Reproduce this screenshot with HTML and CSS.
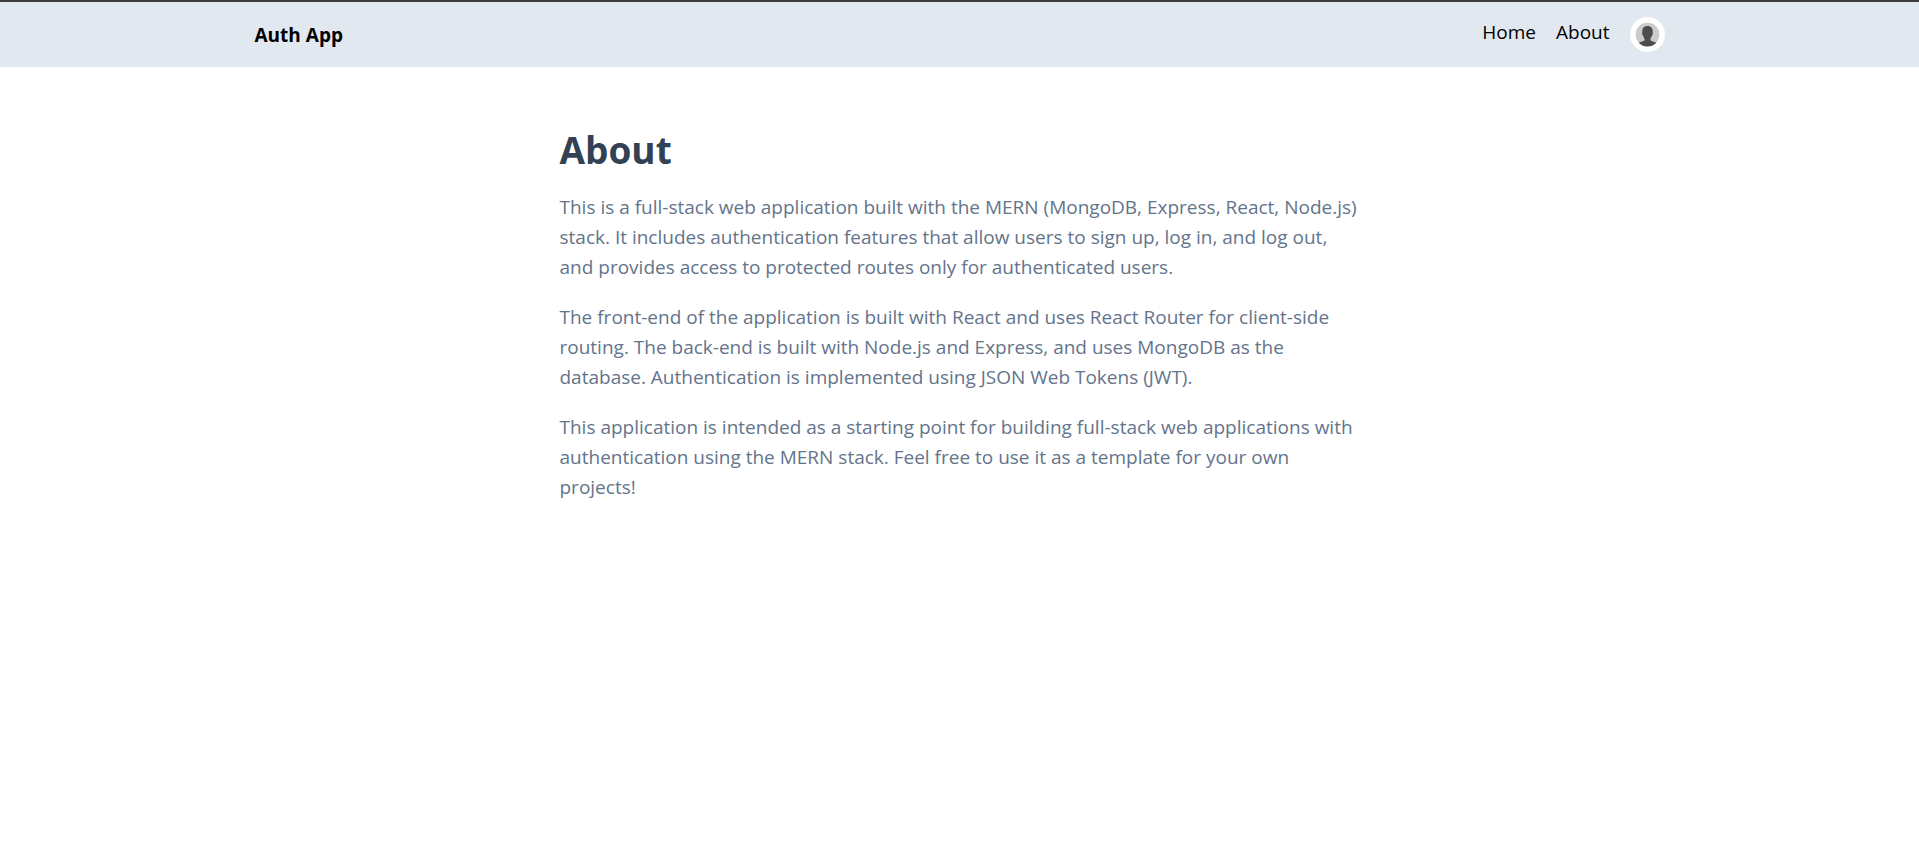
FILE: index.html
```html
<!DOCTYPE html>
<html lang="en">
<head>
<meta charset="utf-8">
<meta name="viewport" content="width=device-width, initial-scale=1">
<title>Auth App</title>
<link rel="stylesheet" href="styles.css">
</head>
<body>
<header class="header">
  <div class="header-inner">
    <a class="brand" href="#home"><h1 class="brand-name">Auth App</h1></a>
    <nav class="nav" aria-label="Main">
      <a class="nav-link" href="#home">Home</a>
      <a class="nav-link" href="#about">About</a>
      <a class="avatar" href="#profile" aria-label="Profile">
        <svg class="avatar-icon" viewBox="0 0 35 35" aria-hidden="true">
          <defs><clipPath id="face"><circle cx="17.5" cy="17.5" r="12"/></clipPath></defs>
          <circle cx="17.5" cy="17.5" r="17.5" fill="#fff"/>
          <g clip-path="url(#face)">
            <circle cx="17.5" cy="17.5" r="12" fill="#cbcbcb"/>
            <path d="M17.5 9c-3.300 0-5.200 2.200-5.200 5.200 0 .5.100 1 .1 1.400-.5.300-.4 1.400.1 2.200.2.400.4.600.6.700.3 1.300.8 2.100 1.400 2.900v1.700c-.4 1-1.700 1.300-3.300 1.700-2 .5-3.500 1.300-4.200 2.700V31h21v-3.500c-.7-1.400-2.200-2.200-4.200-2.700-1.600-.4-2.900-.7-3.300-1.700v-1.700c.6-.8 1.100-1.600 1.400-2.900.2-.1.400-.3.600-.7.500-.8.600-1.900.1-2.200 0-.4.100-.9.100-1.400C22.700 11.200 20.800 9 17.500 9z" fill="#4d4d4d"/>
          </g>
        </svg>
      </a>
    </nav>
  </div>
</header>
<main class="content" id="about">
  <h2 class="title">About</h2>
  <p class="text">This is a full-stack web application built with the MERN (MongoDB, Express, React, Node.js) stack. It includes authentication features that allow users to sign up, log in, and log out, and provides access to protected routes only for authenticated users.</p>
  <p class="text">The front-end of the application is built with React and uses React Router for client-side routing. The back-end is built with Node.js and Express, and uses MongoDB as the database. Authentication is implemented using JSON Web Tokens (JWT).</p>
  <p class="text">This application is intended as a starting point for building full-stack web applications with authentication using the MERN stack. Feel free to use it as a template for your own projects!</p>
</main>
</body>
</html>
```
FILE: styles.css
```css
* {
  box-sizing: border-box;
  margin: 0;
}

body {
  background: #fff;
  color: #000;
  font-family: "Segoe UI", "Open Sans", "Noto Sans", sans-serif;
  font-size: 19px;
  line-height: 30px;
}

a {
  color: inherit;
  text-decoration: none;
}

.header {
  border-top: 2px solid #3c3c3c;
  background: #e2e8f0;
}

.header-inner {
  display: flex;
  justify-content: space-between;
  align-items: center;
  max-width: 1440px;
  margin: 0 auto;
  padding: 15px;
}

.brand-name {
  font-size: 19px;
  font-weight: 700;
}

.nav {
  display: flex;
  align-items: flex-start;
  gap: 20px;
}

.avatar,
.avatar-icon {
  display: block;
  width: 35px;
  height: 35px;
}

.content {
  max-width: 840px;
  margin: 0 auto;
  padding: 60px 20px;
}

.title {
  margin-bottom: 20px;
  color: #334155;
  font-size: 37px;
  font-weight: 700;
  line-height: 45px;
}

.text {
  margin-bottom: 20px;
  color: #64748b;
}
```
